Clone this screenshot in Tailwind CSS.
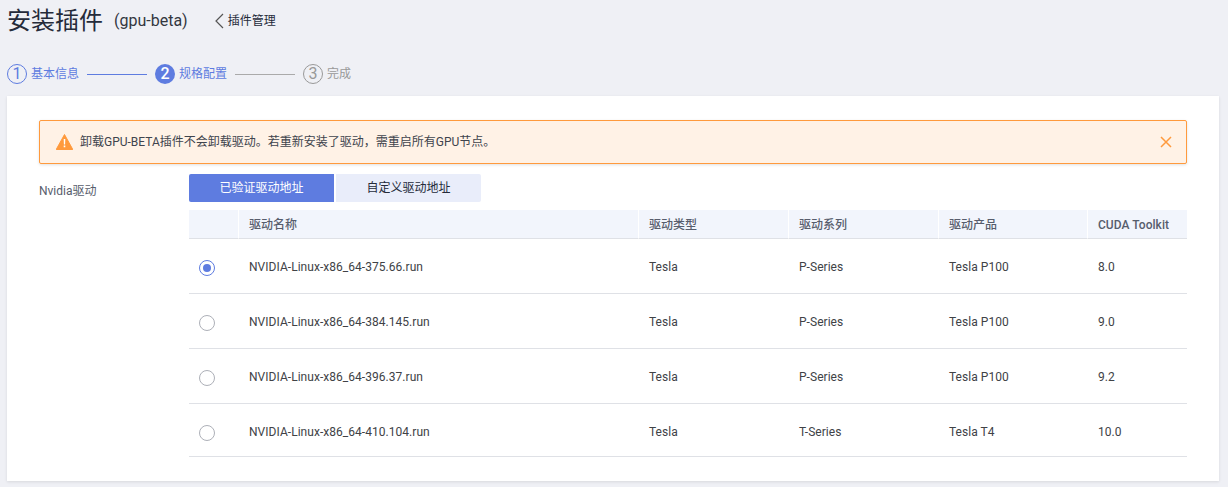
<!DOCTYPE html>
<html lang="zh-CN">
<head>
  <meta charset="UTF-8" />
  <title>安装插件</title>
  <script src="https://cdn.jsdelivr.net/npm/@tailwindcss/browser@4"></script>
</head>
<body class="bg-[#eff0f5] h-[487px] overflow-hidden text-[12px] text-[#404246] font-['Roboto','Noto_Sans_CJK_SC',sans-serif]">

  <!-- Header -->
  <header class="h-[42px] pl-[7px] flex items-center">
    <h1 class="text-[24px] leading-[42px] text-[#252b3a]">安装插件</h1>
    <span class="ml-[11px] text-[16px] text-[#33373f]">(gpu-beta)</span>
    <span class="ml-[26px] flex items-center gap-[3px] text-[#252b3a]">
      <svg width="11" height="16" viewBox="0 0 11 16" fill="none" stroke="#555" stroke-width="1.2"><path d="M9 1 L2 8 L9 15" /></svg>
      插件管理
    </span>
  </header>

  <!-- Steps -->
  <div class="h-[54px] pl-[7px] pt-[22px] flex items-start">
    <div class="w-[20px] h-[20px] rounded-full border border-[#5e7ce0] text-[#5e7ce0] flex items-center justify-center text-[16px]">1</div>
    <span class="ml-[4px] leading-[20px] text-[#5e7ce0]">基本信息</span>
    <div class="ml-[8px] mt-[9.5px] w-[60px] h-px bg-[#5e7ce0]"></div>
    <div class="ml-[8px] w-[20px] h-[20px] rounded-full bg-[#5e7ce0] text-white flex items-center justify-center text-[16px] font-medium">2</div>
    <span class="ml-[4px] leading-[20px] text-[#5e7ce0]">规格配置</span>
    <div class="ml-[8px] mt-[9.5px] w-[60px] h-px bg-[#aaaaaa]"></div>
    <div class="ml-[8px] w-[20px] h-[20px] rounded-full border border-[#999] text-[#999] flex items-center justify-center text-[16px]">3</div>
    <span class="ml-[4px] leading-[20px] text-[#999]">完成</span>
  </div>

  <!-- Card -->
  <main class="mx-[7px] w-[1212px] h-[385px] bg-white shadow-[0_1px_3px_rgba(0,0,0,0.1)] px-[32px] pt-[24px]">
    <div class="h-[44px] bg-[#fff2e6] border border-[#ff9a3d] rounded-[2px] shadow-[0_1px_3px_rgba(0,0,0,0.12)] flex items-center pl-[16px] pr-[14px]">
      <svg width="17" height="16" viewBox="0 0 17 16"><path d="M8.5 0.5 L16.8 15.5 H0.2 Z" fill="#ff9a3d" stroke="#ff9a3d" stroke-linejoin="round" /><path d="M7.7 5 H9.3 L9.1 10.5 H7.9 Z M7.7 11.6 H9.3 V13.2 H7.7 Z" fill="#fff" /></svg>
      <span class="ml-[7px] flex-1 text-[#40444d]">卸载GPU-BETA插件不会卸载驱动。若重新安装了驱动，需重启所有GPU节点。</span>
      <svg width="12" height="12" viewBox="0 0 12 12" stroke="#ff9a3d" stroke-width="1.5"><path d="M1 1 L11 11 M11 1 L1 11" /></svg>
    </div>

    <div class="mt-[10px] flex">
      <label class="w-[150px] pt-[8px] leading-[18px] text-[#575d6c]">Nvidia驱动</label>
      <div class="w-[998px]">
        <div class="flex gap-[2px]">
          <div class="w-[145px] h-[28px] flex items-center justify-center bg-[#5e7ce0] text-white rounded-l-[2px]">已验证驱动地址</div>
          <div class="w-[145px] h-[28px] flex items-center justify-center bg-[#e9edfa] text-[#252b3a] rounded-r-[2px]">自定义驱动地址</div>
        </div>

        <!-- Table -->
        <div class="mt-[8px] grid grid-cols-[50px_400px_150px_150px_149px_99px] tracking-[0.04px]">
          <div class="h-[29px] bg-[#f2f5fc] border-b border-[#dfe1e6] border-r border-r-white"></div>
          <div class="h-[29px] bg-[#f2f5fc] border-b border-[#dfe1e6] border-r border-r-white pl-[10px] pt-[2px] flex items-center font-medium text-[#575d6c]">驱动名称</div>
          <div class="h-[29px] bg-[#f2f5fc] border-b border-[#dfe1e6] border-r border-r-white pl-[10px] pt-[2px] flex items-center font-medium text-[#575d6c]">驱动类型</div>
          <div class="h-[29px] bg-[#f2f5fc] border-b border-[#dfe1e6] border-r border-r-white pl-[10px] pt-[2px] flex items-center font-medium text-[#575d6c]">驱动系列</div>
          <div class="h-[29px] bg-[#f2f5fc] border-b border-[#dfe1e6] border-r border-r-white pl-[10px] pt-[2px] flex items-center font-medium text-[#575d6c]">驱动产品</div>
          <div class="h-[29px] bg-[#f2f5fc] border-b border-[#dfe1e6] pl-[10px] pt-[2px] flex items-center font-medium text-[#575d6c]">CUDA Toolkit</div>

          <div class="h-[55px] border-b border-[#dfe1e6] pl-[10px] pt-[21px]"><div class="w-[16px] h-[16px] rounded-full border border-[#5e7ce0] flex items-center justify-center"><div class="w-[8px] h-[8px] rounded-full bg-[#5e7ce0]"></div></div></div>
          <div class="h-[55px] border-b border-[#dfe1e6] pl-[10px] pt-[2px] flex items-center">NVIDIA-Linux-x86_64-375.66.run</div>
          <div class="h-[55px] border-b border-[#dfe1e6] pl-[10px] pt-[2px] flex items-center">Tesla</div>
          <div class="h-[55px] border-b border-[#dfe1e6] pl-[10px] pt-[2px] flex items-center">P-Series</div>
          <div class="h-[55px] border-b border-[#dfe1e6] pl-[10px] pt-[2px] flex items-center">Tesla P100</div>
          <div class="h-[55px] border-b border-[#dfe1e6] pl-[10px] pt-[2px] flex items-center">8.0</div>

          <div class="h-[55px] border-b border-[#dfe1e6] pl-[10px] pt-[21px]"><div class="w-[16px] h-[16px] rounded-full border border-[#adb0b8]"></div></div>
          <div class="h-[55px] border-b border-[#dfe1e6] pl-[10px] pt-[2px] flex items-center">NVIDIA-Linux-x86_64-384.145.run</div>
          <div class="h-[55px] border-b border-[#dfe1e6] pl-[10px] pt-[2px] flex items-center">Tesla</div>
          <div class="h-[55px] border-b border-[#dfe1e6] pl-[10px] pt-[2px] flex items-center">P-Series</div>
          <div class="h-[55px] border-b border-[#dfe1e6] pl-[10px] pt-[2px] flex items-center">Tesla P100</div>
          <div class="h-[55px] border-b border-[#dfe1e6] pl-[10px] pt-[2px] flex items-center">9.0</div>

          <div class="h-[55px] border-b border-[#dfe1e6] pl-[10px] pt-[21px]"><div class="w-[16px] h-[16px] rounded-full border border-[#adb0b8]"></div></div>
          <div class="h-[55px] border-b border-[#dfe1e6] pl-[10px] pt-[2px] flex items-center">NVIDIA-Linux-x86_64-396.37.run</div>
          <div class="h-[55px] border-b border-[#dfe1e6] pl-[10px] pt-[2px] flex items-center">Tesla</div>
          <div class="h-[55px] border-b border-[#dfe1e6] pl-[10px] pt-[2px] flex items-center">P-Series</div>
          <div class="h-[55px] border-b border-[#dfe1e6] pl-[10px] pt-[2px] flex items-center">Tesla P100</div>
          <div class="h-[55px] border-b border-[#dfe1e6] pl-[10px] pt-[2px] flex items-center">9.2</div>

          <div class="h-[53px] border-b border-[#dfe1e6] pl-[10px] pt-[21px]"><div class="w-[16px] h-[16px] rounded-full border border-[#adb0b8]"></div></div>
          <div class="h-[53px] border-b border-[#dfe1e6] pl-[10px] pt-[4px] flex items-center">NVIDIA-Linux-x86_64-410.104.run</div>
          <div class="h-[53px] border-b border-[#dfe1e6] pl-[10px] pt-[4px] flex items-center">Tesla</div>
          <div class="h-[53px] border-b border-[#dfe1e6] pl-[10px] pt-[4px] flex items-center">T-Series</div>
          <div class="h-[53px] border-b border-[#dfe1e6] pl-[10px] pt-[4px] flex items-center">Tesla T4</div>
          <div class="h-[53px] border-b border-[#dfe1e6] pl-[10px] pt-[4px] flex items-center">10.0</div>
        </div>
      </div>
    </div>
  </main>
</body>
</html>
